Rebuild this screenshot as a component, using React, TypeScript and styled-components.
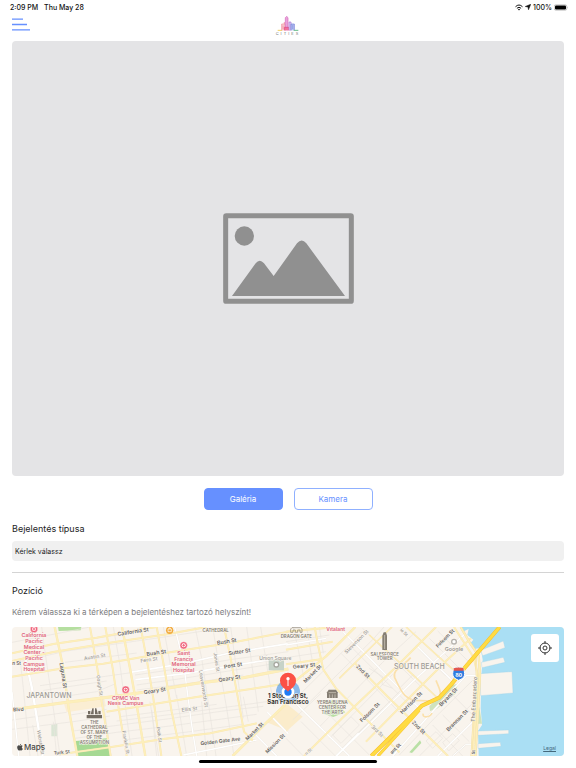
import React from "react";
import styled, { createGlobalStyle } from "styled-components";

const GlobalStyle = createGlobalStyle`
  *, *::before, *::after { box-sizing: border-box; }
  body {
    margin: 0;
    background: #ffffff;
    color: #1c1c1e;
    font-family: Inter, "Liberation Sans", sans-serif;
  }
`;

const blue = "#6690ff";

const Page = styled.div`
  display: flex;
  flex-direction: column;
  min-height: 100vh;
  overflow: hidden;
`;

const StatusBar = styled.div`
  display: flex;
  justify-content: space-between;
  align-items: center;
  height: 14px;
  padding: 0 8px 0 10px;
  font-size: 7px;
  font-weight: 500;
  color: #111111;
`;

const StatusGroup = styled.div<{ $gap: number }>`
  display: flex;
  align-items: center;
  gap: ${(p) => p.$gap}px;
`;

const Header = styled.header`
  display: grid;
  grid-template-columns: 1fr auto 1fr;
  align-items: start;
  height: 27px;
  padding: 0 12px;
`;

const MenuButton = styled.button`
  display: flex;
  justify-self: start;
  padding: 4px 0;
  border: 0;
  background: none;
  cursor: pointer;
`;

const Logo = styled.div`
  display: flex;
  flex-direction: column;
  align-items: center;
  padding-top: 2px;
`;

const Wordmark = styled.span`
  font-size: 4px;
  line-height: 5px;
  letter-spacing: 2px;
  color: #777777;
`;

const Main = styled.main`
  display: flex;
  flex-direction: column;
  padding: 0 12px;
`;

const Photo = styled.div`
  display: flex;
  align-items: center;
  justify-content: center;
  aspect-ratio: 552 / 435;
  border-radius: 4px;
  background: #e4e4e6;
`;

const Actions = styled.div`
  display: flex;
  justify-content: center;
  gap: 11px;
  margin: 12px 0;
`;

const ActionButton = styled.button<{ $filled?: boolean }>`
  width: 79px;
  height: 22px;
  padding: 0;
  border: 1px solid ${(p) => (p.$filled ? blue : "#8fb0ff")};
  border-radius: 4px;
  background: ${(p) => (p.$filled ? blue : "#ffffff")};
  color: ${(p) => (p.$filled ? "#ffffff" : blue)};
  font-family: inherit;
  font-size: 8px;
  cursor: pointer;
`;

const FieldLabel = styled.label`
  font-size: 9px;
  line-height: 13px;
  margin-bottom: 6px;
`;

const TypeSelect = styled.select`
  appearance: none;
  width: 100%;
  height: 20px;
  padding: 0 3px;
  border: 0;
  border-radius: 4px;
  background: #f0f0f0;
  color: #1c1c1e;
  font-family: inherit;
  font-size: 7px;
`;

const Divider = styled.hr`
  width: 100%;
  height: 1px;
  margin: 11px 0;
  border: 0;
  background: #d4d4d4;
`;

const SectionTitle = styled.h2`
  margin: 0 0 9px;
  font-size: 9px;
  font-weight: 400;
  line-height: 13px;
`;

const Hint = styled.p`
  margin: 0 0 8px;
  font-size: 8px;
  line-height: 13px;
  color: #7c7c7e;
`;

const MapFrame = styled.section`
  position: relative;
  aspect-ratio: 552 / 129;
  border-radius: 4px;
  overflow: hidden;
  background: #f9f4ed;
`;

const MapDrawing = styled.svg`
  display: block;
  width: 100%;
  height: 100%;
  font-family: Inter, "Liberation Sans", sans-serif;
`;

const LocateButton = styled.button`
  position: absolute;
  top: 7px;
  right: 5px;
  display: flex;
  align-items: center;
  justify-content: center;
  width: 28px;
  height: 28px;
  padding: 0;
  border: 0;
  border-radius: 3px;
  background: #ffffff;
  cursor: pointer;
`;

const MapBrand = styled.div`
  position: absolute;
  left: 5px;
  bottom: 4px;
  display: flex;
  align-items: center;
  gap: 1px;
  font-size: 8px;
  line-height: 10px;
  font-weight: 500;
  color: #4b4a48;
`;

const LegalLink = styled.a`
  position: absolute;
  right: 8px;
  bottom: 4px;
  font-size: 5px;
  line-height: 8px;
  color: #44697c;
`;

const HomeIndicator = styled.div`
  align-self: center;
  width: 31%;
  height: 3px;
  margin: 4px 0;
  border-radius: 2px;
  background: #000000;
`;

type Line = [width: number, d: string];

const Roads = ({ color, casing, lines }: { color: string; casing?: string; lines: Line[] }) => (
  <g fill="none" strokeLinejoin="round">
    {casing && lines.map(([w, d]) => <path key={"c" + d} d={d} stroke={casing} strokeWidth={w + 2} />)}
    {lines.map(([w, d]) => (
      <path key={d} d={d} stroke={color} strokeWidth={w} />
    ))}
  </g>
);

type LabelProps = {
  x: number;
  y: number;
  r?: number;
  size?: number;
  color?: string;
  weight?: number;
  lines: string[];
  lead?: number;
};

const MapLabel = ({ x, y, r = 0, size = 16, color = "#66625d", weight = 600, lines, lead = 17 }: LabelProps) => (
  <text
    transform={`translate(${x} ${y}) rotate(${r})`}
    textAnchor="middle"
    fontSize={size}
    fontWeight={weight}
    fill={color}
    stroke="#fbf7f1"
    strokeWidth={3}
    paintOrder="stroke"
  >
    {lines.map((t, i) => (
      <tspan key={t + i} x={0} y={i * lead + size * 0.36}>
        {t}
      </tspan>
    ))}
  </text>
);

const Hospital = ({ x, y }: { x: number; y: number }) => (
  <g transform={`translate(${x} ${y})`}>
    <circle r="11" fill="#f0657c" stroke="#fff" strokeWidth="1" />
    <circle r="6" fill="#fff" />
    <path d="M-4 0H4M0-4V4" stroke="#f0657c" strokeWidth="3" />
  </g>
);

const pink = "#e0647c";
const faint = "#9d9a95";
const landmark = "#857e73";
const yellowRoad = "#fdefba";
const yellowCasing = "#f9e6b4";

const westMinor: Line[] = [
  [2, "M6 52L160 22L240 6"], [2, "M6 115L170 78L470 35L660 6"],
  [2, "M90 182L300 152L370 142"], [2, "M100 196L290 168"], [2, "M170 213L260 200L312 178"],
  [2, "M180 270L290 253"], [2, "M6 285L170 262"], [2, "M6 313L190 290L300 273"],
  [2, "M190 318L330 300L470 282L640 258L760 244"], [2, "M196 340L320 322L480 303L740 268"],
  [2, "M330 275L480 256L620 238"], [2, "M340 345L540 320L700 298"], [2, "M320 288L520 264L800 226"],
  [2, "M170 50L340 28L420 8"], [2, "M165 112L380 84"], [2, "M380 180L520 160L780 118"],
  [2, "M375 150L500 132L660 104L835 80"], [2, "M380 195L560 172L700 150"],
  [2, "M95 6L102 60L130 250L150 393"], [2, "M68 300L84 393"], [2, "M130 290L140 393"],
  [2, "M250 80L268 152L290 300L303 393"], [2, "M310 6L330 120L352 290L366 393"],
  [2, "M420 230L446 393"], [2, "M555 6L575 100L596 240L618 393"],
  [2, "M608 6L622 90L650 250L672 393"], [2, "M460 6L500 220"], [2, "M662 6L700 280"],
  [2, "M710 6L745 260"], [2, "M752 6L770 120L792 245"], [2, "M30 100L40 190L60 393"],
  [2, "M425 255L440 393"], [2, "M500 210L530 393"], [2, "M575 230L590 393"], [2, "M700 215L715 290"],
];

const westWhite: Line[] = [
  [5, "M360 142L520 116L660 84L835 56"], [5, "M376 164L530 145L690 118L835 96"],
  [7, "M46 100L66 190L84 300L98 393"], [4, "M6 200L26 393"],
  [4, "M494 6L520 110L545 300L560 393"], [4, "M520 390L640 366L740 345"],
  [4, "M728 320L800 393"], [4, "M772 262L835 326"],
];

const westYellow: Line[] = [
  [4, "M6 85L130 57L260 38L400 12L440 6"], [4, "M6 155L160 130L280 116L480 82L660 54L835 20"],
  [4, "M6 108L130 81L300 53L470 28L590 6"],
  [7, "M6 254L170 232L300 216L400 202L560 175L700 158L835 132"],
  [4, "M290 260L400 242L560 216L835 175"], [4, "M150 388L290 368L460 342L600 325L740 295"],
  [5, "M134 6L160 130L176 250L202 393"], [4, "M240 6L262 130L275 230L302 393"],
  [4, "M286 6L308 130L326 250L350 393"], [5, "M336 6L360 130L380 240L406 393"],
  [4, "M392 6L415 130L430 220L454 393"], [4, "M440 6L463 130L485 260L514 393"],
  [4, "M642 6L660 90L684 220L702 320L728 346"],
  [6, "M668 393L770 292L835 230"],
];

const eastMinor: Line[] = [
  [2, "M0 50L130 30"], [2, "M0 98L120 80"], [2, "M22 6L38 80L54 160"], [2, "M62 6L80 115"], [2, "M100 6L112 85"],
  [2, "M40 210L170 80L230 20"], [2, "M64 238L260 44L294 6"], [2, "M20 285L104 206"],
  [2, "M100 306L290 112L390 20"], [2, "M130 340L320 148"], [2, "M168 370L300 240L350 190"],
  [2, "M200 340L290 250"], [2, "M230 10L330 112L410 190"], [2, "M190 60L300 170L370 240"],
  [2, "M165 85L240 160L340 262"], [2, "M250 130L290 155L288 178L320 190"],
  [2, "M90 230L180 320L250 390"], [2, "M45 290L148 393"], [2, "M0 340L52 393"],
  [2, "M340 190L380 150L410 180L370 220Z"], [2, "M430 40L520 130"], [2, "M455 18L550 112"],
  [2, "M400 74L480 154"], [2, "M340 390L450 275L560 166"], [2, "M440 300L530 393"],
  [2, "M470 270L550 350"], [2, "M400 393L565 230"], [2, "M420 348L450 320L470 340L440 370Z"],
  [2, "M470 352L500 326L520 346L488 378Z"], [2, "M500 210L560 270"], [2, "M140 330L195 275L220 300L165 355Z"],
];

const eastWhite: Line[] = [
  [4, "M28 234L190 393"], [4, "M172 22L230 78L300 150L400 250"],
  [4, "M152 393L262 286L382 168L540 24"], [4, "M320 393L452 246L540 152H575"],
  [4, "M390 60L440 110L500 168"], [4, "M455 393L560 290"], [4, "M150 393L218 324"],
  [4, "M0 60L120 40"], [3, "M500 393L540 358H570"],
];

const eastYellow: Line[] = [
  [4, "M0 20L150 6"], [4, "M0 74L140 50"], [4, "M0 118L110 102"],
  [5, "M0 190L120 94L208 6"], [4, "M86 6L96 60L112 134L150 190L250 292L340 382"],
  [4, "M208 116L300 210L420 328L486 393"], [4, "M54 393L170 278L330 126L450 6"],
  [3, "M250 30L360 130L456 220"], [4, "M240 350L354 234L480 108L555 40"],
  [3, "M360 6L450 88L508 140"], [3, "M160 160L268 54L318 6"],
  [4, "M504 6L535 54L562 96L576 150L570 260L560 393"],
];

const WestMap = () => (
  <g transform="translate(-6 -6)">
    <path d="M144 6H214L212 16L146 18Z" fill="#b5dfa0" />
    <path d="M196 348L292 340L302 393H202Z" fill="#a6d993" />
    <path d="M124 300L142 296V334H124Z" fill="#dbe6d5" />
    <path d="M770 292L835 232V318Z" fill="#fbeccb" />
    <path d="M162 238L282 218L288 244L170 262Z" fill="#fbeed3" />
    <Roads color="#e8e4de" lines={westMinor} />
    <Roads color="#ffffff" casing="#eee9e2" lines={westWhite} />
    <Roads color={yellowRoad} casing={yellowCasing} lines={westYellow} />
    <rect x="776" y="104" width="46" height="32" fill="#c7d3c8" />
    <circle cx="799" cy="119" r="7" fill="#fff" stroke="#a7a8a0" strokeWidth="4" />
    <Hospital x={72} y={12} />
    <Hospital x={347} y={194} />
    <Hospital x={521} y={61} />
    <circle cx="479" cy="16" r="11" fill="#f2ab3d" />
    <path d="M474 12H484V20H474ZM477 12V9H481V12" fill="none" stroke="#fff" strokeWidth="2" />
    <g fill="#746c62">
      <path d="M230 280V270H276V280Z" />
      <path d="M234 268V258H241V268ZM265 268V258H272V268Z" />
      <path d="M242 268L247 250H251V268ZM255 268V250H259L264 268Z" />
    </g>
    <MapLabel x={72} y={31} color={pink} lead={17} lines={["California", "Pacific", "Medical", "Center -", "Pacific", "Campus", "Hospital"]} />
    <MapLabel x={347} y={218} color={pink} size={16} lines={["CPMC Van", "Ness Campus"]} />
    <MapLabel x={521} y={84} color={pink} size={16} lines={["Saint", "Francis", "Memorial", "Hospital"]} />
    <MapLabel x={369} y={20} r={-9} lines={["California St"]} />
    <MapLabel x={617} y={15} size={13} color={landmark} lines={["CATHEDRAL"]} />
    <MapLabel x={254} y={95} r={-9} size={15} weight={500} color={faint} lines={["Austin St"]} />
    <MapLabel x={439} y={83} r={-8} lines={["Bush St"]} />
    <MapLabel x={650} y={49} r={-9} lines={["Bush St"]} />
    <MapLabel x={417} y={104} r={-8} size={15} weight={500} color={faint} lines={["Fern St"]} />
    <MapLabel x={688} y={80} r={-9} lines={["Sutter St"]} />
    <MapLabel x={669} y={121} r={-9} lines={["Post St"]} />
    <MapLabel x={658} y={160} r={-9} lines={["Geary St"]} />
    <MapLabel x={434} y={197} r={-9} lines={["Geary St"]} />
    <MapLabel x={538} y={252} r={-6} size={15} weight={500} color={faint} lines={["Ellis St"]} />
    <MapLabel x={631} y={348} r={-7} size={15} lines={["Golden Gate Ave"]} />
    <MapLabel x={733} y={319} r={-45} size={15} lines={["Market St"]} />
    <MapLabel x={795} y={356} r={-45} size={15} lines={["Mission St"]} />
    <MapLabel x={155} y={382} r={-6} size={14} lines={["Turk St"]} />
    <MapLabel x={160} y={151} r={81} lines={["Laguna St"]} />
    <MapLabel x={269} y={181} r={81} size={14} weight={500} color={faint} lines={["Gough St"]} />
    <MapLabel x={581} y={191} r={81} size={15} weight={500} color={faint} lines={["Leavenworth St"]} />
    <MapLabel x={620} y={111} r={81} size={14} weight={500} color={faint} lines={["Jones St"]} />
    <MapLabel x={448} y={329} r={82} size={14} weight={500} color={faint} lines={["Polk St"]} />
    <MapLabel x={348} y={352} r={80} size={14} weight={500} color={faint} lines={["Franklin St"]} />
    <MapLabel x={92} y={352} r={81} size={14} weight={500} color={faint} lines={["Webster St"]} />
    <MapLabel x={20} y={115} size={14} lines={["n St"]} />
    <MapLabel x={25} y={253} r={-5} size={15} lines={["Blvd"]} />
    <MapLabel x={117} y={211} size={21} weight={500} color={faint} lines={["JAPANTOWN"]} />
    <MapLabel x={253} y={292} size={13} color={landmark} lead={15} lines={["THE", "CATHEDRAL", "OF ST. MARY", "OF THE", "ASSUMPTION"]} />
    <MapLabel x={796} y={99} size={15} weight={500} color={faint} lines={["Union Square"]} />
  </g>
);

const EastMap = () => (
  <g transform="translate(822 -6)">
    <path d="M0 235L50 275L0 320Z" fill="#fbeccb" />
    <path d="M138 224L178 262L142 276L112 266Z" fill="#b9e0a5" />
    <path d="M488 184L515 176L510 205L452 252L432 258L430 244Z" fill="#cfe3bd" />
    <path d="M370 382L402 346L406 354L378 384Z" fill="#b9e0a5" />
    <Roads color="#e8e4de" lines={eastMinor} />
    <Roads color="#ffffff" casing="#eee9e2" lines={eastWhite} />
    <Roads color={yellowRoad} casing={yellowCasing} lines={eastYellow} />
    <g fill="none" stroke="#fae0ac" strokeWidth="5">
      <path d="M374 98C350 125 318 134 326 158C342 190 350 216 382 226L440 228" />
      <path d="M450 166C462 196 472 208 450 224M412 266C406 278 430 280 438 264" />
    </g>
    <path d="M524 6L530 20L548 12L544 30L562 44L554 54L566 72L584 68L590 104L586 150L584 250L588 300L576 318L578 393H852V6Z" fill="#aadff4" />
    <g fill="#f9f4ed" stroke="#9fd2e6" strokeWidth="1">
      <path d="M584 76L652 48L657 68L590 92Z" />
      <path d="M586 112L652 97L657 112L588 128Z" />
      <path d="M582 146L678 140L681 204L584 212Z" />
      <path d="M576 318L668 315V326L576 331Z" />
      <path d="M576 356L643 352L645 364L576 370Z" />
    </g>
    <path d="M580 244L588 296L576 296Z" fill="#cfe3bd" />
    <Roads color={yellowRoad} casing="#f3dba0" lines={[[5, "M524 6L552 54L578 92L582 150L574 290L568 393"], [3, "M570 96L572 160L562 290L556 393"]]} />
    <path d="M256 393L350 300L408 242L460 218L496 178L540 124L641 6" fill="none" stroke="#f5bd33" strokeWidth="12" />
    <path d="M276 393L344 318L400 256" fill="none" stroke="#f5bd33" strokeWidth="9" />
    <path d="M256 393L350 300L408 242L460 218L496 178L540 124L641 6" fill="none" stroke="#ffdc43" strokeWidth="9" />
    <path d="M276 393L344 318L400 256" fill="none" stroke="#ffdc43" strokeWidth="7" />
    <g>
      <path d="M504 130Q518 124 532 130Q540 148 532 158Q526 163 518 166Q510 163 504 158Q496 148 504 130Z" fill="#2f7de0" stroke="#fff" strokeWidth="3" />
      <path d="M503 137V130Q518 125 533 130V137Z" fill="#e4564c" />
      <text x="518" y="155" textAnchor="middle" fontSize="16" fontWeight="700" fill="#fff">80</text>
    </g>
    <g fill="#857e73">
      <path d="M289 75V32L293 22H300L303 32V75Z" />
      <path d="M123 219V202L128 194H150L155 202V219Z" />
      <path d="M128 203H150M131 208V219M139 208V219M147 208V219M296 30V72" fill="none" stroke="#d9d1c6" strokeWidth="2" />
      <path d="M14 12L18 8H44L48 12V22H42V15H35V22H28V15H21V22H14Z" fill="none" stroke="#857e73" strokeWidth="2" />
    </g>
    <circle cx="504" cy="50" r="7" fill="#fff" stroke="#b6b3ae" strokeWidth="4" />
    <MapLabel x={31} y={35} size={13} color={landmark} lines={["DRAGON GATE"]} />
    <MapLabel x={149} y={13} size={15} color={pink} lines={["Vitalant"]} />
    <MapLabel x={296} y={87} size={13} color={landmark} lead={14} lines={["SALESFORCE", "TOWER"]} />
    <MapLabel x={139} y={231} size={13} color={landmark} lead={15} lines={["YERBA BUENA", "CENTER FOR", "THE ARTS"]} />
    <MapLabel x={400} y={125} size={21} weight={500} color={faint} lines={["SOUTH BEACH"]} />
    <MapLabel x={504} y={72} color={faint} lines={["Google"]} />
    <MapLabel x={54} y={122} r={-6} lines={["Geary St"]} />
    <MapLabel x={79} y={146} r={-45} size={15} lines={["Market St"]} />
    <MapLabel x={211} y={50} r={-45} size={15} weight={500} color={faint} lines={["Stevenson St"]} />
    <MapLabel x={354} y={22} r={45} size={13} weight={500} color={faint} lines={["ie St"]} />
    <MapLabel x={231} y={139} r={45} lines={["2nd St"]} />
    <MapLabel x={398} y={307} r={45} lines={["2nd St"]} />
    <MapLabel x={274} y={318} r={45} size={15} weight={500} color={faint} lines={["3rd St"]} />
    <MapLabel x={251} y={262} r={-45} lines={["Folsom St"]} />
    <MapLabel x={477} y={40} r={-45} size={15} lines={["Folsom St"]} />
    <MapLabel x={375} y={233} r={-45} lines={["Harrison St"]} />
    <MapLabel x={486} y={216} r={-46} lines={["Bryant St"]} />
    <MapLabel x={513} y={286} r={-45} lines={["Brannan St"]} />
    <MapLabel x={328} y={371} r={-45} size={14} lines={["ant St"]} />
    <MapLabel x={67} y={380} r={-45} size={13} weight={500} color={faint} lines={["n St"]} />
    <MapLabel x={564} y={223} r={-87} size={16} weight={500} color="#8b8780" lines={["The Embarcadero"]} />
    <MapLabel x={562} y={382} r={-87} size={13} lines={["St"]} />
    <circle cx="6" cy="201" r="36" fill="#2e86e6" fillOpacity="0.55" />
    <MapLabel x={6} y={212} size={18} weight={700} color="#33322f" lead={19} lines={["1 Stockton St,", "San Francisco"]} />
    <circle cx="6" cy="201" r="19" fill="#fff" />
    <circle cx="6" cy="201" r="11" fill="#1f7cf5" />
    <path d="M6 200C3 192-18 188-18 167A24 24 0 0 1 30 167C30 188 9 192 6 200Z" fill="#fb5145" />
    <path d="M6 164V183" stroke="#fff" strokeWidth="3" />
    <circle cx="6" cy="161" r="5" fill="#fff" />
  </g>
);

const StatusIcons = () => (
  <>
    <svg width="8" height="7" viewBox="0 0 16 13" fill="none" stroke="#111" strokeWidth="2" aria-hidden="true">
      <path d="M1 5Q8-2 15 5M3.8 8Q8 4 12.2 8" />
      <path d="M5.8 10Q8 8 10.2 10L8 12.5Z" fill="#111" stroke="none" />
    </svg>
    <svg width="6" height="6" viewBox="0 0 12 12" aria-hidden="true">
      <path d="M11.5.5L7 11.5L6 6L.5 5Z" fill="#111" stroke="#111" />
    </svg>
  </>
);

const Battery = () => (
  <svg width="14" height="7" viewBox="0 0 28 14" aria-hidden="true">
    <rect x="0.5" y="1.5" width="25" height="11" rx="3" fill="#fff" stroke="#999" />
    <rect x="2" y="3" width="22" height="8" rx="2" fill="#000" />
    <path d="M26 5Q28 7 26 9Z" fill="#999" />
  </svg>
);

const Skyline = () => (
  <svg width="22" height="15" viewBox="0 0 66 45" fill="none" strokeWidth="2" aria-hidden="true">
    <path d="M2 43H16" stroke="#f2cf5b" strokeWidth="3" />
    <path d="M14 43V24H24V43" stroke="#ee8a94" fill="#fbd7da" />
    <path d="M18 28V40M22 18V24" stroke="#ee6f8d" />
    <path d="M25 43V5L29 1L33 5V43" stroke="#d468bd" fill="#e9a3da" />
    <path d="M22 43V34H40V43" stroke="#e0447f" fill="#f0709b" />
    <path d="M36 43V18H42V43" stroke="#a678d6" fill="#dccbf2" />
    <path d="M42 43V24H52V43" stroke="#6b78d8" fill="#b9c4f2" />
    <path d="M45 30H49M45 36H49" stroke="#5a6ad0" />
    <path d="M50 43H64" stroke="#67bd8a" strokeWidth="3" />
  </svg>
);

export default function App() {
  return (
    <Page>
      <GlobalStyle />
      <StatusBar>
        <StatusGroup $gap={6}>
          <span>2:09 PM</span>
          <span>Thu May 28</span>
        </StatusGroup>
        <StatusGroup $gap={2}>
          <StatusIcons />
          <span>100%</span>
          <Battery />
        </StatusGroup>
      </StatusBar>
      <Header>
        <MenuButton aria-label="Menü">
          <svg width="18" height="13" viewBox="0 0 18 13" stroke={blue} strokeWidth="1.3" aria-hidden="true">
            <path d="M0 1.2H11M0 6.5H15M0 11.8H18" />
          </svg>
        </MenuButton>
        <Logo>
          <Skyline />
          <Wordmark>CITIES</Wordmark>
        </Logo>
      </Header>
      <Main>
        <Photo>
          <svg width="131" height="91" viewBox="0 0 393 273" fill="#909090" role="img" aria-label="Kép helye">
            <rect x="8" y="8" width="377" height="257" rx="2" fill="none" stroke="#909090" strokeWidth="15" strokeLinejoin="round" />
            <circle cx="64" cy="69" r="29" />
            <path d="M27 249L98 151Q110 136 123 151L152 189L222 91Q236 74 250 91L366 249Z" />
          </svg>
        </Photo>
        <Actions>
          <ActionButton $filled>Galéria</ActionButton>
          <ActionButton>Kamera</ActionButton>
        </Actions>
        <FieldLabel htmlFor="report-type">Bejelentés típusa</FieldLabel>
        <TypeSelect id="report-type" defaultValue="">
          <option value="">Kérlek válassz</option>
        </TypeSelect>
        <Divider />
        <SectionTitle>Pozíció</SectionTitle>
        <Hint>Kérem válassza ki a térképen a bejelentéshez tartozó helyszínt!</Hint>
        <MapFrame aria-label="Térkép">
          <MapDrawing viewBox="0 0 1656 387" preserveAspectRatio="xMidYMid slice">
            <WestMap />
            <EastMap />
          </MapDrawing>
          <MapBrand>
            <svg width="6" height="8" viewBox="0 0 18 22" fill="#4b4a48" aria-hidden="true">
              <path d="M12.5 1C12.6 3.6 10.6 5.5 8.6 5.4C8.4 3 10.5 1.1 12.5 1ZM9.2 7C10 7 11.3 5.8 13.2 5.9C14.8 6 16.2 6.7 17 8C13.4 10.3 14 14.8 17.6 16.2C16.6 18.8 14.8 21.5 13 21.5C11.6 21.5 11.2 20.6 9.4 20.6C7.6 20.6 7 21.5 5.8 21.5C3.6 21.5.5 17 .5 12.6C.5 8.4 3 6 5.6 6C7.2 6 8.4 7 9.2 7Z" />
            </svg>
            <span>Maps</span>
          </MapBrand>
          <LocateButton aria-label="Saját helyzet">
            <svg width="14" height="14" viewBox="0 0 42 42" fill="none" stroke="#333" strokeWidth="3" aria-hidden="true">
              <circle cx="21" cy="21" r="15" />
              <circle cx="21" cy="21" r="6" />
              <path d="M21 0V8M21 34V42M0 21H8M34 21H42" />
            </svg>
          </LocateButton>
          <LegalLink href="#legal">Legal</LegalLink>
        </MapFrame>
      </Main>
      <HomeIndicator />
    </Page>
  );
}
